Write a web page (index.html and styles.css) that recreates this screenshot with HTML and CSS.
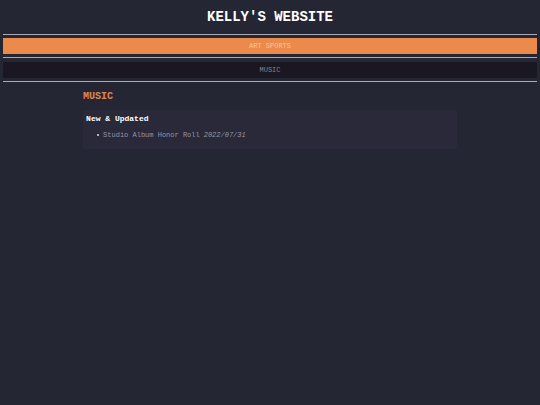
FILE: index.html
```html
<!DOCTYPE html>
<html lang="en">
<head>
    <meta charset="UTF-8">
    <meta name="viewport" content="width=device-width, initial-scale=1.0">
    <title>Kelly's Website</title>
    <link rel="stylesheet" href="styles.css">
</head>
<body>
    <header>
        <h1>KELLY'S WEBSITE</h1>
    </header>
    <hr>
    <nav class="main-nav">
        <a href="#art">ART</a>
        <a href="#sports">SPORTS</a>
    </nav>
    <hr>
    <nav class="sub-nav">
        <a href="#music">MUSIC</a>
    </nav>
    <hr>
    <main>
        <h2 id="music">MUSIC</h2>
        <section class="card">
            <h3>New &amp; Updated</h3>
            <ul>
                <li>Studio Album Honor Roll <em>2022/07/31</em></li>
            </ul>
        </section>
    </main>
</body>
</html>
```
FILE: styles.css
```css
body {
    margin: 0 3px;
    background-color: #242733;
    color: #9695a1;
    font-family: "Courier New", "Liberation Mono", monospace;
    font-size: 7px;
    line-height: 8px;
}
h1 {
    margin: 0;
    padding: 9px 0;
    color: #fff;
    font-size: 14px;
    line-height: 16px;
    text-align: center;
}
hr {
    height: 1px;
    margin: 0;
    border: none;
    background-color: #a9aab2;
}
nav {
    margin: 3px 0;
    padding: 4px 0;
    text-align: center;
}
nav a {
    color: inherit;
    text-decoration: none;
}
.main-nav {
    background-color: #ec8a4b;
    color: #f8c4a0;
}
.sub-nav {
    margin-top: 4px;
    background-color: #1a1722;
    color: #85838d;
}
main {
    width: 70%;
    margin: 0 auto;
}
h2 {
    margin: 9px 0 7px;
    color: #e0864e;
    font-size: 10px;
    line-height: 12px;
}
.card {
    padding: 4px 3px 10px;
    background-color: #29293a;
    border-radius: 2px;
}
h3 {
    margin: 0 0 7px;
    color: #fff;
    font-size: 8px;
    line-height: 10px;
}
ul {
    margin: 0;
    padding-left: 11px;
    list-style: none;
}
li {
    display: flex;
    align-items: center;
    gap: 4px;
}
li::before {
    content: "";
    width: 2px;
    height: 2px;
    border-radius: 50%;
    background-color: #dddde2;
}
```
